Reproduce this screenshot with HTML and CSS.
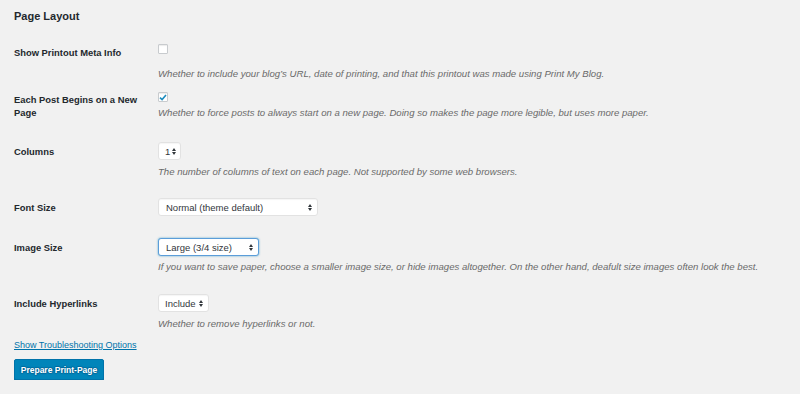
FILE: index.html
```html
<!DOCTYPE html>
<html>
<head>
<meta charset="utf-8">
<link rel="stylesheet" href="styles.css">
</head>
<body>
<div class="wrap">
  <h2 class="title">Page Layout</h2>

  <div class="row row-meta">
    <div class="label">Show Printout Meta Info</div>
    <div class="field">
      <span class="checkbox"></span>
      <p class="desc desc-meta">Whether to include your blog’s URL, date of printing, and that this printout was made using Print My Blog.</p>
    </div>
  </div>

  <div class="row row-newpage">
    <div class="label">Each Post Begins on a New Page</div>
    <div class="field">
      <span class="checkbox checked">
        <svg width="8" height="7" viewBox="0 0 8 7"><path d="M1 3.6 L3.1 5.6 L7 1" fill="none" stroke="#1e8cbe" stroke-width="1.6"/></svg>
      </span>
      <p class="desc desc-newpage">Whether to force posts to always start on a new page. Doing so makes the page more legible, but uses more paper.</p>
    </div>
  </div>

  <div class="row row-columns">
    <div class="label label-select">Columns</div>
    <div class="field">
      <div class="select select-columns"><span>1</span><svg class="arrows" width="4" height="7" viewBox="0 0 4 7"><path d="M0 3 L2 0 L4 3 Z M0 4 L2 7 L4 4 Z" fill="#32373c"/></svg></div>
      <p class="desc desc-select">The number of columns of text on each page. Not supported by some web browsers.</p>
    </div>
  </div>

  <div class="row row-fontsize">
    <div class="label label-select">Font Size</div>
    <div class="field">
      <div class="select select-font"><span>Normal (theme default)</span><svg class="arrows" width="4" height="7" viewBox="0 0 4 7"><path d="M0 3 L2 0 L4 3 Z M0 4 L2 7 L4 4 Z" fill="#32373c"/></svg></div>
    </div>
  </div>

  <div class="row row-image">
    <div class="label label-select">Image Size</div>
    <div class="field">
      <div class="select select-image focus"><span>Large (3/4 size)</span><svg class="arrows" width="4" height="7" viewBox="0 0 4 7"><path d="M0 3 L2 0 L4 3 Z M0 4 L2 7 L4 4 Z" fill="#32373c"/></svg></div>
      <p class="desc desc-select">If you want to save paper, choose a smaller image size, or hide images altogether. On the other hand, deafult size images often look the best.</p>
    </div>
  </div>

  <div class="row row-links">
    <div class="label label-select">Include Hyperlinks</div>
    <div class="field">
      <div class="select select-links"><span>Include</span><svg class="arrows" width="4" height="7" viewBox="0 0 4 7"><path d="M0 3 L2 0 L4 3 Z M0 4 L2 7 L4 4 Z" fill="#32373c"/></svg></div>
      <p class="desc desc-select">Whether to remove hyperlinks or not.</p>
    </div>
  </div>

  <a class="toggle" href="#">Show Troubleshooting Options</a>
  <div class="actions">
    <button class="button-primary">Prepare Print-Page</button>
  </div>
</div>
</body>
</html>
```

FILE: styles.css
```css
html, body {
  margin: 0;
  padding: 0;
  background: #f1f1f1;
}
body {
  font-family: "Liberation Sans", Arial, sans-serif;
  color: #23282d;
  font-size: 9px;
}
.wrap {
  padding: 8px 0 0 14px;
}
.title {
  margin: 0;
  font-size: 11px;
  line-height: 16px;
  font-weight: bold;
  color: #23282d;
}
.row {
  display: grid;
  grid-template-columns: 144px 1fr;
}
.label {
  font-weight: bold;
  font-size: 9.4px;
  line-height: 13px;
  padding-top: 2px;
  padding-right: 14px;
  color: #23282d;
}
.label-select {
  padding-top: 3px;
}
.field {
  display: flex;
  flex-direction: column;
  align-items: flex-start;
}
.desc {
  margin: 0;
  font-style: italic;
  color: #6a6a6a;
  font-size: 9.6px;
  line-height: 14px;
}
.checkbox {
  width: 10px;
  height: 10px;
  box-sizing: border-box;
  border: 1px solid #c8cbce;
  background: #fff;
  border-radius: 1px;
  box-shadow: inset 0 1px 1px rgba(0,0,0,0.08);
  display: flex;
  align-items: center;
  justify-content: center;
}
.row-meta { margin-top: 20px; }
.desc-meta { margin-top: 13px; }
.row-newpage { margin-top: 11px; }
.row-newpage .label { padding-top: 1px; }
.desc-newpage { margin-top: 4px; }
.row-columns { margin-top: 22px; }
.row-fontsize { margin-top: 19px; }
.row-image { margin-top: 22px; }
.row-links { margin-top: 20px; }
.desc-select { margin-top: 5px; }
.row-image .desc-select { margin-top: 4px; }

.select {
  box-sizing: border-box;
  height: 18px;
  background: #fff;
  border: 1px solid #e2e2e2;
  border-radius: 3px;
  box-shadow: inset 0 1px 1px rgba(0,0,0,0.04);
  display: flex;
  align-items: center;
  justify-content: space-between;
  padding: 0 5px 0 7px;
  font-size: 9.5px;
  color: #32373c;
}
.select-columns { width: 23px; padding: 0 4px 0 6px; }
.select-font { width: 160px; }
.select-image { width: 101px; }
.select-links { width: 51px; padding: 0 5px 0 6px; }
.select.focus {
  border-color: #5b9dd9;
  box-shadow: 0 0 2px rgba(30,140,190,0.8);
}
.arrows { flex: none; }

.toggle {
  display: inline-block;
  margin-top: 7px;
  color: #0073aa;
  font-size: 9px;
  line-height: 14px;
  text-decoration: underline;
}
.actions {
  margin-top: 7px;
}
.button-primary {
  font-family: "Liberation Sans", Arial, sans-serif;
  font-size: 8.5px;
  font-weight: bold;
  color: #fff;
  background: #0085ba;
  border: 1px solid #0073aa;
  border-radius: 2px;
  box-shadow: 0 1px 0 #006799;
  text-shadow: 0 -1px 1px #006799, 1px 0 1px #006799, 0 1px 1px #006799, -1px 0 1px #006799;
  height: 21px;
  width: 90px;
  padding: 0;
  margin: 0;
}
```
